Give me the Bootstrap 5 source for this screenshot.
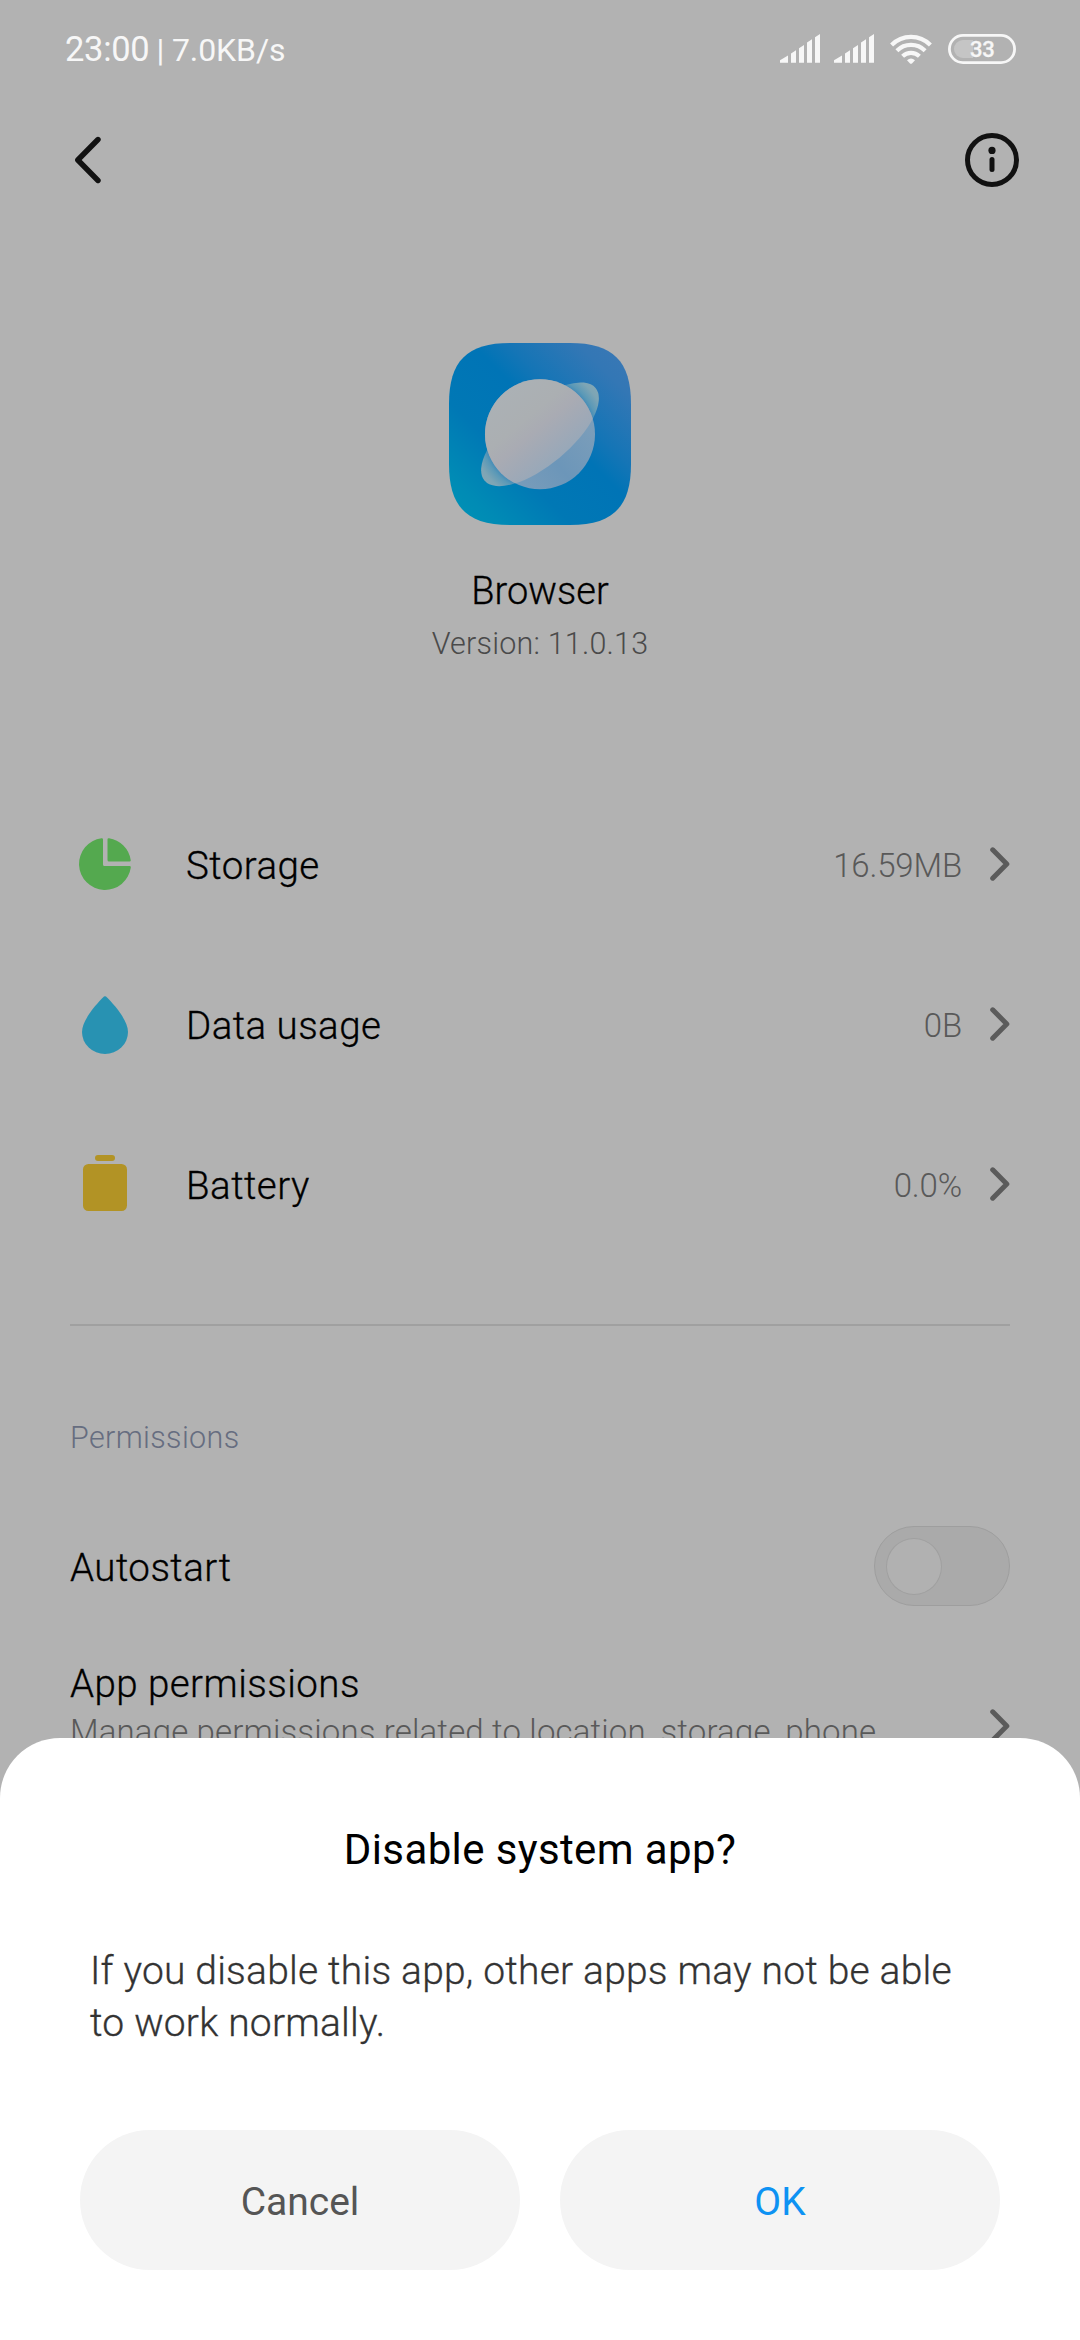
<!DOCTYPE html>
<html lang="en">
<head>
<meta charset="utf-8">
<meta name="viewport" content="width=device-width, initial-scale=1">
<title>App info</title>
<link href="https://cdn.jsdelivr.net/npm/bootstrap@5.3.0/dist/css/bootstrap.min.css" rel="stylesheet">
<style>
  body { font-family: Roboto, "Liberation Sans", sans-serif; background: #b2b2b2; color: #000; width: 1080px; height: 2340px; overflow: hidden; }
  svg { display: block; flex: none; }
  .screen { height: 2340px; }
  .status-bar { height: 98px; padding: 0 64px 0 65px; color: #f7f7f7; }
  .status-icons { gap: 16px; }
  .signals { gap: 14px; }
  .clock { font-size: 34.5px; line-height: 40px; letter-spacing: -.3px; }
  .net-speed { font-size: 32px; line-height: 40px; letter-spacing: -.1px; margin-left: 7px; }
  .top-bar { height: 124px; padding: 0 61px 0 73px; }
  .app-head { padding-top: 121px; }
  .txt-main { font-size: 38.5px; line-height: 50px; letter-spacing: .45px; font-weight: 300; color: #000; -webkit-text-stroke: .3px #000; }
  .txt-main.app-name { margin-top: 41px; font-size: 38px; letter-spacing: 0; }
  .app-version { font-size: 30.5px; line-height: 40px; font-weight: 300; letter-spacing: .2px; color: #4a4a4a; margin-top: 8px; }
  .app-rows { margin-top: 120px; padding: 0 70px; }
  .app-row { height: 160px; background: transparent; padding: 0 0 0 9px; border: 0; }
  .row-icon { width: 52px; margin-right: 55px; }
  .app-row .txt-main, .app-row .row-value { padding-top: 4px; }
  .row-value { font-size: 33px; line-height: 50px; font-weight: 300; letter-spacing: -.15px; color: #595959; margin-right: 28px; }
  .divider { height: 2px; background: #a0a0a0; margin: 60px 70px 0; }
  .section-label { font-size: 30.5px; line-height: 40px; font-weight: 300; letter-spacing: .35px; color: #666d80; padding: 92px 70px 0; }
  .perm-row { height: 160px; margin-top: 28px; padding: 0 70px; }
  .perm-row .txt-main { padding-top: 4px; }
  .toggle { width: 136px; height: 80px; border-radius: 40px; border: 1px solid #9e9e9e; background: #aaa; padding-left: 11px; }
  .toggle-knob { width: 56px; height: 57px; border-radius: 50%; border: 1px solid #a0a0a0; background: #b1b1b1; }
  .perm-link { padding: 13px 70px 0; }
  .perm-link svg { margin-top: 50px; }
  .perm-sub { font-size: 33px; line-height: 42px; font-weight: 300; letter-spacing: .15px; color: #595959; padding-top: 2px; }
  .sheet { height: 602px; background: #fff; border-radius: 60px 60px 0 0; padding: 85px 80px 70px; width: 1080px; z-index: 10; }
  .sheet-title { font-size: 42px; line-height: 54px; font-weight: 400; letter-spacing: .38px; }
  .sheet-text { font-size: 39px; line-height: 52px; font-weight: 300; letter-spacing: .2px; color: #333; -webkit-text-stroke: .3px #333; margin: 68px 0 0; padding: 0 10px; }
  .sheet-actions { gap: 40px; }
  .pill, .pill:hover { height: 140px; width: 440px; border: 0; background: #f4f4f4; font-size: 39px; line-height: 50px; padding: 4px 0 0; color: #555; }
  .pill.pill-ok { color: #0d92f3; }
</style>
<script src="https://cdn.jsdelivr.net/npm/bootstrap@5.3.0/dist/js/bootstrap.bundle.min.js"></script>
</head>
<body>
<svg width="0" height="0" class="position-absolute">
  <symbol id="chev" viewBox="0 0 20 34"><path d="M2.7 2.8L16.8 17 2.7 31.2" fill="none" stroke="#5b5b5b" stroke-width="5" stroke-linecap="round" stroke-linejoin="round"/></symbol>
  <symbol id="signal" viewBox="0 0 40 30"><path d="M0 28.8v-2.6L8 21.4v7.4zM11 28.8V19.5l5-3.2v12.5zM19 28.8V14.3l5-3.2v17.7zM27 28.8V8.5l5-3.2v23.5zM35 28.8V3.2L40 0v28.8z" fill="#f7f7f7"/></symbol>
</svg>
<div class="screen d-flex flex-column position-relative overflow-hidden">
  <header class="status-bar d-flex align-items-center justify-content-between">
    <div class="d-flex align-items-baseline">
      <span class="clock">23:00</span>
      <span class="net-speed">| 7.0KB/s</span>
    </div>
    <div class="status-icons d-flex align-items-center">
      <div class="signals d-flex">
        <svg width="40" height="30"><use href="#signal"/></svg>
        <svg width="40" height="30"><use href="#signal"/></svg>
      </div>
      <svg width="42" height="30" viewBox="0 0 42 30" fill="none" stroke="#f7f7f7" stroke-width="4.2">
        <path d="M1.6 11A27.2 27.2 0 0 1 40.4 11"/>
        <path d="M6.9 16.7A20 20 0 0 1 35.1 16.7"/>
        <path d="M12.6 22.3A12.2 12.2 0 0 1 29.4 22.3"/>
        <path d="M17 26.2Q21 22.6 25 26.2L22.2 29.3Q21 30.4 19.8 29.3Z" fill="#f7f7f7" stroke="none"/>
      </svg>
      <svg width="68" height="30" viewBox="0 0 68 30">
        <rect x="1.4" y="1.4" width="65.2" height="27.2" rx="13.6" fill="none" stroke="#f7f7f7" stroke-width="2.8"/>
        <path d="M15 6h10v18H15a9 9 0 0 1 0-18z" fill="#c5c5c5"/>
        <text x="34.2" y="22.8" text-anchor="middle" font-family="Roboto, sans-serif" font-size="22" font-weight="500" stroke="#f7f7f7" stroke-width=".3" fill="#f7f7f7" letter-spacing="-.3">33</text>
      </svg>
    </div>
  </header>

  <nav class="top-bar d-flex align-items-center justify-content-between">
    <svg width="28" height="48" viewBox="0 0 28 48"><path d="M25 3.5L4.8 24 25 44.5" fill="none" stroke="#111" stroke-width="5.4" stroke-linecap="round" stroke-linejoin="round"/></svg>
    <svg width="54" height="54" viewBox="0 0 54 54"><circle cx="27" cy="27" r="24.5" fill="none" stroke="#111" stroke-width="5"/><circle cx="27" cy="17.4" r="3.6" fill="#111"/><path d="M27 26.500v10" stroke="#111" stroke-width="5" stroke-linecap="round"/></svg>
  </nav>

  <section class="app-head d-flex flex-column align-items-center text-center">
    <svg width="182" height="182" viewBox="0 0 182 182">
      <defs>
        <linearGradient id="bg" x1="0" y1="1" x2="1" y2="0">
          <stop offset="0" stop-color="#0094b5"/><stop offset=".14" stop-color="#008bb5"/><stop offset=".34" stop-color="#0078b5"/><stop offset=".56" stop-color="#0074b6"/><stop offset=".66" stop-color="#1575b6"/><stop offset=".85" stop-color="#3377b5"/><stop offset="1" stop-color="#3c78b5"/>
        </linearGradient>
        <linearGradient id="planet" gradientUnits="userSpaceOnUse" x1="91" y1="36" x2="91" y2="122">
          <stop offset="0" stop-color="#abb1b5"/><stop offset=".4" stop-color="#abafb2"/><stop offset=".58" stop-color="#a9abb3"/><stop offset=".8" stop-color="#a0a9b6"/><stop offset="1" stop-color="#97a8b9"/>
        </linearGradient>
        <linearGradient id="shade" gradientUnits="userSpaceOnUse" x1="60" y1="140" x2="145" y2="70">
          <stop offset="0" stop-color="#7a9dba"/><stop offset=".45" stop-color="#6c96b9"/><stop offset="1" stop-color="#7e9fba"/>
        </linearGradient>
        <radialGradient id="ring" gradientUnits="userSpaceOnUse" cx="91" cy="91" r="76">
          <stop offset=".7" stop-color="#3c87b8"/><stop offset=".77" stop-color="#5b99b7"/><stop offset=".88" stop-color="#7da5b5"/><stop offset="1" stop-color="#86a8b5"/>
        </radialGradient>
        <clipPath id="disc"><circle cx="91" cy="91.300" r="55"/></clipPath>
      </defs>
      <path d="M0 61C0 18 18 0 61 0h60c43 0 61 18 61 61v60c0 43-18 61-61 61H61C18 182 0 164 0 121z" fill="url(#bg)"/>
      <ellipse cx="91" cy="91.300" rx="72.300" ry="30.500" transform="rotate(-39.800 91 91.300)" fill="url(#ring)"/>
      <circle cx="91" cy="91.300" r="55" fill="url(#shade)"/>
      <g clip-path="url(#disc)"><g transform="rotate(-39.800 91 91.300)" fill="url(#planet)"><path d="M18.700 91.300V20h144.600v71.300A72.300 30.500 0 0 1 18.700 91.300z"/></g></g>
    </svg>
    <div class="txt-main app-name">Browser</div>
    <div class="app-version">Version: 11.0.13</div>
  </section>

  <div class="list-group list-group-flush app-rows">
    <div class="list-group-item app-row d-flex align-items-center">
      <div class="row-icon"><svg width="52" height="52" viewBox="0 0 52 52" fill="#54a94f"><path d="M22.500 .2Q24 0 24 1.500V26.500Q24 28 25.500 28H50.500Q52 28 51.800 29.500A26 26 0 1 1 22.500 .2zM28.500 1.500Q28.500 0 30 .3A26 26 0 0 1 51.700 22Q52 23.400 50.500 23.400H30Q28.500 23.400 28.500 21.900z"/></svg></div>
      <div class="txt-main flex-grow-1">Storage</div><div class="row-value">16.59MB</div>
      <svg width="20" height="34"><use href="#chev"/></svg>
    </div>
    <div class="list-group-item app-row d-flex align-items-center">
      <div class="row-icon"><svg width="52" height="60" viewBox="0 -2 52 60" fill="#2892b2"><path d="M25 .6Q26 -.3 27 .6C37 10.500 49 25 49 36A23 22 0 0 1 3 36C3 25 15 10.500 25 .6z"/></svg></div>
      <div class="txt-main flex-grow-1">Data usage</div><div class="row-value">0B</div>
      <svg width="20" height="34"><use href="#chev"/></svg>
    </div>
    <div class="list-group-item app-row d-flex align-items-center">
      <div class="row-icon"><svg width="52" height="58" viewBox="0 1 52 58" fill="#b29325"><rect x="16" y="1" width="20" height="6" rx="3"/><rect x="4" y="10" width="44" height="47" rx="5.500"/></svg></div>
      <div class="txt-main flex-grow-1">Battery</div><div class="row-value">0.0%</div>
      <svg width="20" height="34"><use href="#chev"/></svg>
    </div>
  </div>

  <div class="divider"></div>
  <div class="section-label">Permissions</div>
  <div class="perm-row d-flex align-items-center justify-content-between">
    <div class="txt-main">Autostart</div>
    <div class="toggle d-flex align-items-center" role="switch" aria-checked="false"><div class="toggle-knob"></div></div>
  </div>
  <div class="perm-link d-flex justify-content-between">
    <div>
      <div class="txt-main">App permissions</div>
      <div class="perm-sub">Manage permissions related to location, storage, phone</div>
    </div>
    <svg width="20" height="34"><use href="#chev"/></svg>
  </div>

  <div class="sheet position-absolute bottom-0 start-0 d-flex flex-column" role="dialog">
    <div class="sheet-title text-center">Disable system app?</div>
    <p class="sheet-text">If you disable this app, other apps may not be able to work normally.</p>
    <div class="sheet-actions d-flex mt-auto">
      <button type="button" class="btn rounded-pill pill">Cancel</button>
      <button type="button" class="btn rounded-pill pill pill-ok">OK</button>
    </div>
  </div>
</div>
</body>
</html>
